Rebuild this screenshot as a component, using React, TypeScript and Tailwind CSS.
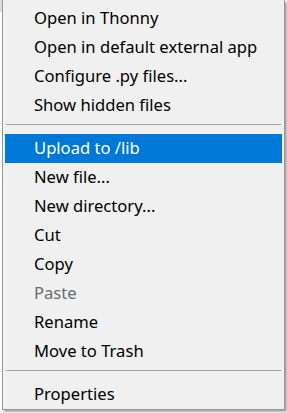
import React from 'react';

type Item = { label: string; kind?: 'item' | 'sep'; active?: boolean; disabled?: boolean };

const items: Item[] = [
  { label: 'Open in Thonny' },
  { label: 'Open in default external app' },
  { label: 'Configure .py files...' },
  { label: 'Show hidden files' },
  { label: '', kind: 'sep' },
  { label: 'Upload to /lib', active: true },
  { label: 'New file...' },
  { label: 'New directory...' },
  { label: 'Cut' },
  { label: 'Copy' },
  { label: 'Paste', disabled: true },
  { label: 'Rename' },
  { label: 'Move to Trash' },
  { label: '', kind: 'sep' },
  { label: 'Properties' },
];

export default function App() {
  return (
    <div
      className="w-[287px] h-[413px] overflow-hidden bg-white flex"
      style={{ fontFamily: '"Noto Sans", "Open Sans", sans-serif' }}
    >
      {/* strip of the window behind the menu */}
      <div className="w-[2px] flex flex-col shrink-0">
        <div className="h-[12px] bg-[#dcdcdc]" />
        <div className="flex-1 bg-white" />
      </div>

      {/* popup menu */}
      <div className="w-[283px] h-[410px] shrink-0 bg-[#f0f0f0] border-l border-r border-b border-[#979797] shadow-[2px_2px_2px_rgba(0,0,0,0.35)] pt-[4px] px-[2px] flex flex-col">
        {items.map((it, i) =>
          it.kind === 'sep' ? (
            <div key={i} className="h-[14px] pt-[4px] px-[1px]">
              <div className="h-px bg-[#a0a0a0]" />
            </div>
          ) : (
            <div
              key={i}
              className={
                'h-[29px] shrink-0 flex items-center pl-[29px] text-[16.6px] leading-none ' +
                (it.active
                  ? 'bg-[#0078d7] text-white'
                  : it.disabled
                    ? 'text-[#6d6d6d]'
                    : 'text-black')
              }
            >
              {it.label}
            </div>
          )
        )}
      </div>
    </div>
  );
}
